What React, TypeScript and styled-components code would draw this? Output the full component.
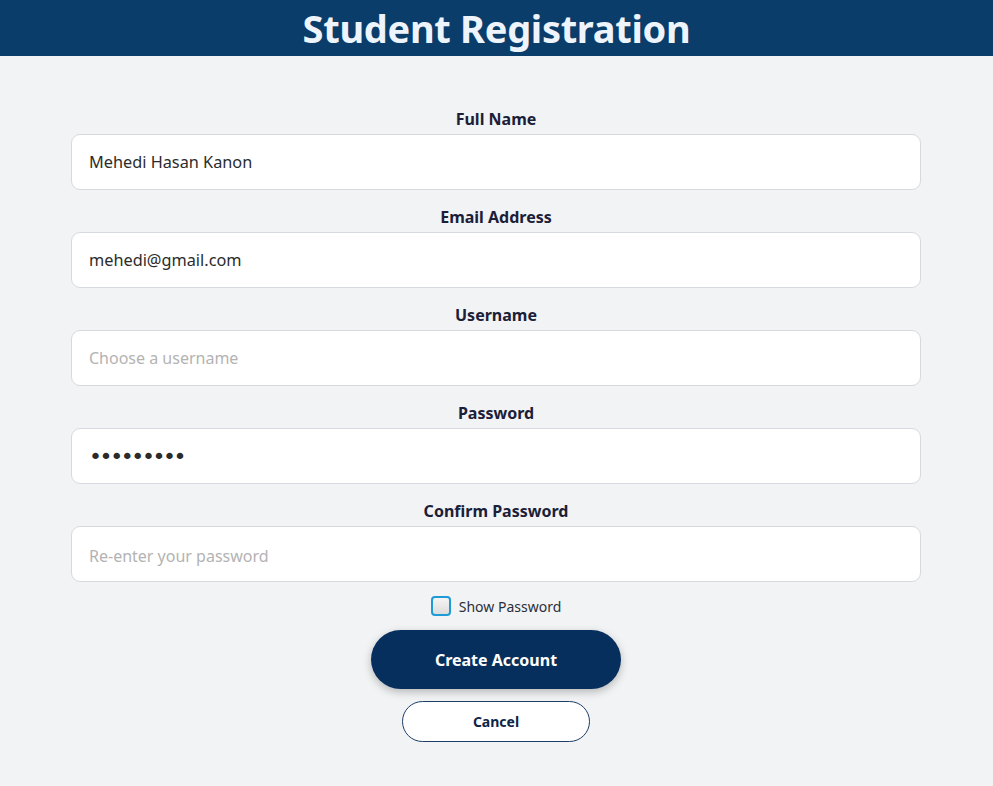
import React, { useState } from 'react';
import styled, { createGlobalStyle } from 'styled-components';

const GlobalStyle = createGlobalStyle`
  * { box-sizing: border-box; }
  body {
    margin: 0;
    background: #f2f3f5;
    font-family: 'Noto Sans', 'Open Sans', sans-serif;
  }
`;

const Header = styled.header`
  height: 56px;
  background: #0b3d6b;
  display: flex;
  align-items: center;
  justify-content: center;
`;

const Title = styled.h1`
  margin: 0;
  font-size: 38px;
  font-weight: 700;
  color: #eef4fb;
  letter-spacing: -0.3px;
`;

const Form = styled.form`
  padding: 52px 72px 40px 71px;
  display: flex;
  flex-direction: column;
  align-items: center;
`;

const Field = styled.div`
  width: 100%;
  display: flex;
  flex-direction: column;
  align-items: center;
  margin-bottom: 16px;

  &:last-of-type {
    margin-bottom: 10px;
  }
`;

const Label = styled.label`
  font-size: 16px;
  font-weight: 700;
  color: #1b2038;
  line-height: 22px;
  margin-bottom: 4px;
`;

const Input = styled.input`
  width: 100%;
  height: 56px;
  padding: 0 17px;
  border: 1px solid #d6d9de;
  border-radius: 9px;
  background: #fff;
  font-family: inherit;
  font-size: 16.3px;
  color: #2b2b2b;
  outline: none;

  &::placeholder {
    color: #b3b3b3;
    font-size: 16px;
    letter-spacing: 0;
  }

  &[type='password'] {
    font-family: 'DejaVu Sans', sans-serif;
    font-size: 22px;
    letter-spacing: -2.4px;
  }

  &[type='password']::placeholder {
    font-family: 'Noto Sans', sans-serif;
    font-size: 16px;
    letter-spacing: 0;
  }
`;

const CheckRow = styled.label`
  display: flex;
  align-items: center;
  gap: 8px;
  margin-top: 4px;
  font-size: 14px;
  color: #2b2f3a;
`;

const Box = styled.input`
  appearance: none;
  width: 20px;
  height: 20px;
  margin: 0;
  border: 2px solid #1e9bd7;
  border-radius: 4px;
  background: linear-gradient(#f4f4f4, #dcdcdc);
`;

const Primary = styled.button`
  margin-top: 14px;
  width: 250px;
  height: 59px;
  border: none;
  border-radius: 30px;
  background: #062f5e;
  color: #fff;
  font-family: inherit;
  font-size: 16px;
  font-weight: 700;
  box-shadow: 0 3px 8px rgba(0, 0, 0, 0.25);
`;

const Secondary = styled.button`
  margin-top: 12px;
  width: 188px;
  height: 41px;
  border: 1.5px solid #1d3d66;
  border-radius: 21px;
  background: #fff;
  color: #0d2547;
  font-family: inherit;
  font-size: 14px;
  font-weight: 700;
`;

const fields = [
  { label: 'Full Name', type: 'text', value: 'Mehedi Hasan Kanon', placeholder: 'Enter your full name' },
  { label: 'Email Address', type: 'email', value: 'mehedi@gmail.com', placeholder: 'Enter your email' },
  { label: 'Username', type: 'text', value: '', placeholder: 'Choose a username' },
  { label: 'Password', type: 'password', value: 'kanon1234', placeholder: 'Create a password' },
  { label: 'Confirm Password', type: 'password', value: '', placeholder: 'Re-enter your password' },
];

export default function App() {
  const [show, setShow] = useState(false);
  return (
    <>
      <GlobalStyle />
      <Header>
        <Title>Student Registration</Title>
      </Header>
      <Form onSubmit={(e) => e.preventDefault()}>
        {fields.map((f) => (
          <Field key={f.label}>
            <Label>{f.label}</Label>
            <Input
              type={f.type === 'password' && show ? 'text' : f.type}
              defaultValue={f.value}
              placeholder={f.placeholder}
            />
          </Field>
        ))}
        <CheckRow>
          <Box type="checkbox" checked={show} onChange={() => setShow(!show)} />
          Show Password
        </CheckRow>
        <Primary type="submit">Create Account</Primary>
        <Secondary type="button">Cancel</Secondary>
      </Form>
    </>
  );
}
